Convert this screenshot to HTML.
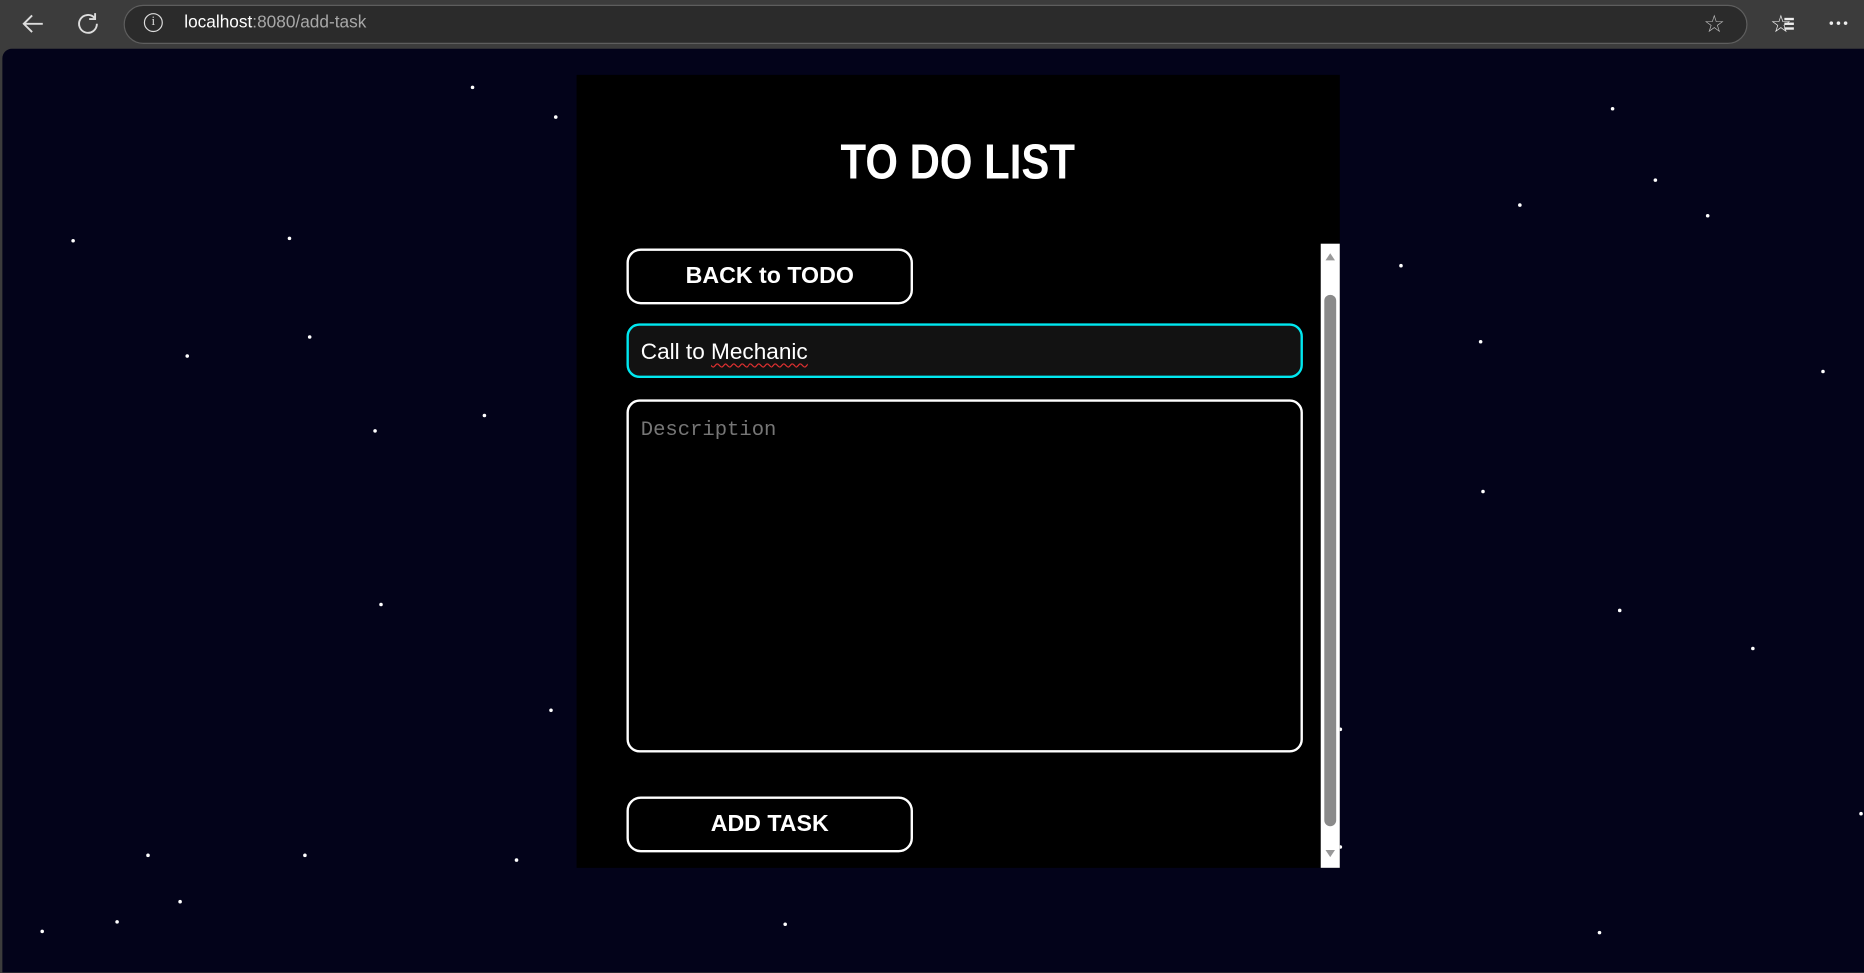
<!DOCTYPE html>
<html><head><meta charset="utf-8"><style>
html,body{margin:0;padding:0;width:1864px;height:973px;overflow:hidden;background:#3c3c3c;}
#w{position:absolute;left:0;top:0;width:1568px;height:818px;transform:scale(1.18878);transform-origin:0 0;font-family:"Liberation Sans",Arial,sans-serif;}
.abs{position:absolute;}
#page{left:2px;top:41px;width:1566px;height:777px;background:#03031a;border-top-left-radius:8px;}
.s{position:absolute;width:3.4px;height:3.4px;border-radius:50%;background:#fff;}
#card{left:485px;top:63px;width:642px;height:667px;background:#000;}
.btn{position:absolute;left:527px;width:237px;height:43px;border:2px solid #fff;border-radius:12px;color:#fff;font-weight:bold;font-size:19.5px;text-align:center;line-height:43px;box-sizing:content-box;}
</style></head><body><div id="w">
<div class="abs" style="left:0;top:0;width:1568px;height:41px;background:#3c3c3c"></div>
<svg class="abs" style="left:16px;top:9px" width="24" height="22" viewBox="0 0 24 22"><path d="M20 11H4M11 4l-7 7 7 7" stroke="#ddd" stroke-width="1.6" fill="none"/></svg>
<svg class="abs" style="left:63px;top:9px" width="22" height="22" viewBox="0 0 22 22"><path d="M16.5 6A7.5 7.5 0 1 0 18.5 11" stroke="#ddd" stroke-width="1.6" fill="none"/><path d="M17 2v5h-5" stroke="#ddd" stroke-width="1.6" fill="none"/></svg>
<div class="abs" style="left:104px;top:4px;width:1364px;height:31px;border:1px solid #5e5e5e;border-radius:17px;background:#2b2b2b"></div>
<div class="abs" style="left:121px;top:11px;width:16px;height:16px;border:1.4px solid #ddd;border-radius:50%;box-sizing:border-box;color:#ddd;font-size:11px;line-height:13px;text-align:center;font-family:'Liberation Serif',serif">i</div>
<div class="abs" style="left:155px;top:11px;font-size:14.5px;color:#fff">localhost<span style="color:#a8a8a8">:8080/add-task</span></div>
<div class="abs" style="left:1433px;top:8px;font-size:20px;color:#bbb">☆</div>
<div class="abs" style="left:1489px;top:8px;font-size:20px;color:#eee">☆</div>
<div class="abs" style="left:1501px;top:15px;width:8px;height:1.5px;background:#eee;box-shadow:0 4px 0 #eee,0 8px 0 #eee"></div>
<div class="abs" style="left:1539px;top:18px;width:3px;height:3px;border-radius:50%;background:#eee;box-shadow:6px 0 0 #eee,12px 0 0 #eee"></div>
<div id="page" class="abs"></div>
<div class="s" style="left:396px;top:72px"></div><div class="s" style="left:466px;top:97px"></div><div class="s" style="left:60px;top:201px"></div><div class="s" style="left:242px;top:199px"></div><div class="s" style="left:259px;top:282px"></div><div class="s" style="left:156px;top:298px"></div><div class="s" style="left:406px;top:348px"></div><div class="s" style="left:314px;top:361px"></div><div class="s" style="left:319px;top:507px"></div><div class="s" style="left:462px;top:596px"></div><div class="s" style="left:123px;top:718px"></div><div class="s" style="left:255px;top:718px"></div><div class="s" style="left:433px;top:722px"></div><div class="s" style="left:150px;top:757px"></div><div class="s" style="left:97px;top:774px"></div><div class="s" style="left:34px;top:782px"></div><div class="s" style="left:659px;top:776px"></div><div class="s" style="left:1355px;top:90px"></div><div class="s" style="left:1391px;top:150px"></div><div class="s" style="left:1435px;top:180px"></div><div class="s" style="left:1277px;top:171px"></div><div class="s" style="left:1177px;top:222px"></div><div class="s" style="left:1244px;top:286px"></div><div class="s" style="left:1532px;top:311px"></div><div class="s" style="left:1246px;top:412px"></div><div class="s" style="left:1361px;top:512px"></div><div class="s" style="left:1473px;top:544px"></div><div class="s" style="left:1126px;top:612px"></div><div class="s" style="left:1564px;top:683px"></div><div class="s" style="left:1126px;top:711px"></div><div class="s" style="left:1344px;top:783px"></div>
<div id="card" class="abs"></div>
<div class="abs" style="left:485px;top:112px;width:642px;text-align:center;color:#fff;font-weight:bold;font-size:41px;line-height:48px"><span style="display:inline-block;transform:scaleX(0.86)">TO DO LIST</span></div>
<div class="abs" style="left:1111px;top:205px;width:16px;height:525px;background:#fff"></div>
<div class="abs" style="left:1114px;top:248px;width:10px;height:447px;background:#8a8a8a;border-radius:5px"></div>
<div class="abs" style="left:1115px;top:213px;width:0;height:0;border-left:4px solid transparent;border-right:4px solid transparent;border-bottom:6px solid #999"></div>
<div class="abs" style="left:1115px;top:715px;width:0;height:0;border-left:4px solid transparent;border-right:4px solid transparent;border-top:6px solid #999"></div>
<div class="btn" style="top:209px">BACK to TODO</div>
<div class="abs" style="left:527px;top:272px;width:565px;height:42px;border:2.5px solid #00e8f0;border-radius:11px;background:#121212"></div>
<div class="abs" style="left:539px;top:286px;color:#fff;font-size:19px">Call to <span style="text-decoration:underline wavy #e03030;text-decoration-thickness:1px;text-underline-offset:3px">Mechanic</span></div>
<div class="abs" style="left:527px;top:336px;width:565px;height:293px;border:2px solid #fff;border-radius:11px;background:#000"></div>
<div class="abs" style="left:539px;top:353px;color:#767676;font-size:17.3px;font-family:'Liberation Mono',monospace">Description</div>
<div class="btn" style="top:670px">ADD TASK</div>
</div></body></html>
